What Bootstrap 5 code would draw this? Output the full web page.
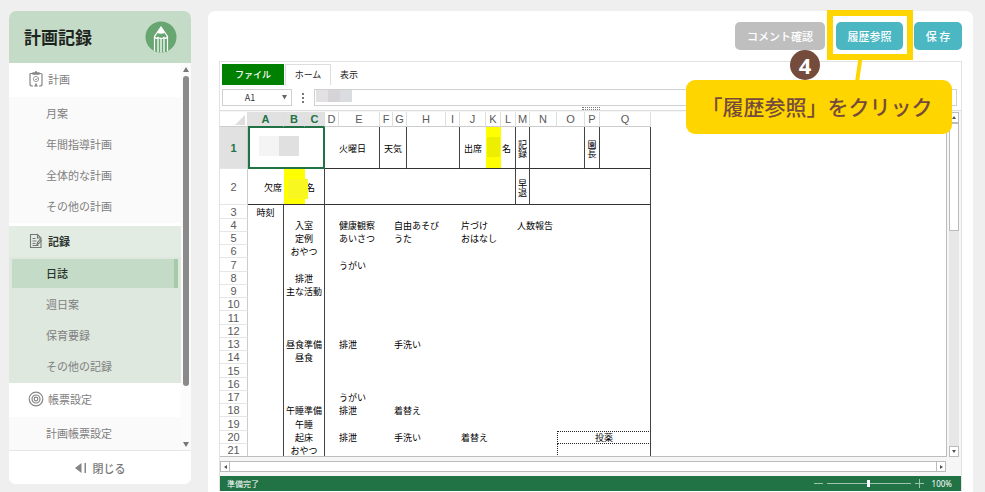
<!DOCTYPE html>
<html lang="ja">
<head>
<meta charset="utf-8">
<meta name="viewport" content="width=device-width, initial-scale=1">
<title>計画記録</title>
<link href="https://cdn.jsdelivr.net/npm/bootstrap@5.3.0/dist/css/bootstrap.min.css" rel="stylesheet">
<style>
body{background:#efefef;font-family:"Noto Sans CJK JP","Noto Sans",sans-serif;font-size:11px;line-height:16px;color:#777;padding:11px 12px 0 9px;gap:17px}
button,input,select{font-family:inherit}
.side{width:182px;border-radius:7px;margin-bottom:8px}
.side-head{background:#c4dbc7;height:52px;padding:0 14px 0 15px}
.side-head h1{font-size:17px;line-height:24px;color:#1c241d}
.side-nav a{color:#808080;text-decoration:none;display:flex;align-items:center;padding-bottom:2px}
.grp{height:34px;padding-left:19px;gap:4px}
.grp svg{width:16px;height:16px}
.side-nav a.grp-on{height:31px;background:#e2ece3;color:#2c332d;font-weight:700;margin-top:3px}
.sub{background:#fafafa;padding:1px 0}
.sub a{height:31px;padding-left:37px}
.sub-on{background:#dee8df}
.sub a.cur{height:29px;margin:1px 3px 1px 3px;padding-left:34px;background:#c4dbc7;border-right:4px solid #a5cbaa;color:#2c332d;font-weight:500}
.rail{width:10px;background:#fbfbfb;padding:4px 0 3px}
.rail i{width:6px;border-radius:3px;background:#8a8a8a;flex:1;margin:4px 0 56px}
.closer{height:34px;border:0;border-top:1px solid #e6e6e6;background:#fff;color:#777;gap:6px;font-weight:500}
.pane{border-radius:7px 7px 0 0;padding:11px 11px 0}
.tool{gap:11px;margin-bottom:11px}
.tool .btn{height:28px;font-size:11px;line-height:16px;font-weight:500;padding:0 11px;min-width:67px;border:0;border-radius:5px;color:#fff;background:#4ab7c3}
.tool .btn-off{background:#bfbfbf;padding:0 12px}
.tool .btn-save{min-width:48px}
.hi-box{left:-9px;right:-10px;top:-12px;bottom:-10px;border:6px solid #ffd500}
.tail{left:16px;top:36px;width:14px;height:24px}
.tip{right:-49px;top:58px;width:266px;height:54px;padding:0 4px 2px 0;border-radius:9px;background:#ffd500;color:#754c3c;font-size:21px;line-height:30px;font-weight:500;z-index:5}
.step{left:-46px;top:28px;width:30px;height:30px;border-radius:50%;background:#754c3c;color:#fff;font:bold 22px/30px "Noto Sans",sans-serif;z-index:6}
.book{border:1px solid #e2e2e2;border-bottom:0;color:#333;font-size:10px;margin-bottom:1px}
.tabs{padding:2px 2px 0;height:23px;gap:1px}
.tabs button{border:0;background:none;font-size:9px;line-height:20px;color:#222;padding:0 8px}
.tabs .file{background:#008000;color:#fff;width:62px;font-weight:500}
.tabs .home{border:1px solid #ddd;border-bottom:0;width:46px;padding:0}
.fx{padding:4px 4px 5px 2px;border-bottom:1px solid #ddd;height:26px}
.namebox{width:70px;height:17px}
.namebox select{appearance:none;border:1px solid #d0d0d0;background:#fff;border-radius:0;font-size:9px;line-height:13px;color:#333;padding:0 14px 0 0;text-align:center;text-align-last:center}
.caret{right:5px;top:6px}
.fx input{height:17px;border:1px solid #d0d0d0;margin-left:8px}
.blur{left:10px;top:1px}
.blur b{width:12px;height:12px}
.grip{left:362px;bottom:0;width:18px;height:3px;border:1px dotted #777;border-width:1px 0}
.work{background:#f6f6f6;min-height:0;padding:1px 2px 0 0;gap:2px}
.view{min-width:0;background:#fff;border-right:1px solid #bdbdbd;border-bottom:1px solid #bdbdbd}
.sheet{table-layout:fixed;width:431px;border-collapse:separate;border-spacing:0;color:#000;font-size:9px;line-height:11px}
.sheet th{font-family:"Liberation Sans",sans-serif;font-size:11px;line-height:14px;font-weight:400;color:#5a5a5a;text-align:center;padding:0;border-right:1px solid #d9e2de;border-bottom:1px solid #e3e8e6}
.sheet thead th{height:15px;border-bottom-color:#ccc}
.sheet tbody th{border-right-color:#c4cfca;line-height:12px}
.sheet .sel{background:#e1e1e1;color:#217346;font-weight:700}
.sheet thead .sel{border-bottom:1px solid #217346}
.sheet td{padding:0;white-space:nowrap;vertical-align:middle}
.sheet .r1 td,.sheet .r2 td{border-bottom:1px solid #333;padding-top:2px}
.sheet .r1{height:42px}
.sheet .r2{height:36px}
.sheet .r{height:13px}
.sheet .r:nth-child(4n+3){height:14px}
.sheet .e{border-right:1px solid #444}
.sheet .p{padding-left:1px}
.sheet .q{padding-right:2px}
.sheet .c{text-align:center}
.sheet .y{background:#ff0}
.sheet .r1 td.pick{border:2px solid #217346;border-top-width:1px;padding:0 0 3px 9px}
.sheet .v{text-align:center}
.sheet .v span{writing-mode:vertical-rl;display:inline-block;vertical-align:middle}
.corner{width:0;height:0;border:5px solid transparent;border-right-color:#ddd;border-bottom-color:#ddd;margin:1px 2px 0 auto}
.mos b{width:20px;height:20px}
.over{left:4px;top:10px;width:20px;height:20px;background:#f8f820}
.over-k{left:1px;top:10px;width:13px;height:20px;background:#eeee00}
.sheet .dash-l{border-left:1px dotted #222}
.sheet .dash-a{border:1px dotted #222;border-right:1px solid #444}
.vs{width:10px;background:#e7e7e7}
.vs button,.hs button{border:1px solid #bbb;background:#fff;padding:0;width:10px;height:11px;display:flex;align-items:center;justify-content:center}
.vs i{height:108px;border:1px solid #bbb;background:#fff}
.hs{background:#f6f6f6;padding:4px 15px 4px 0}
.hs i{border:1px solid #bbb;border-width:1px 0;background:#fff}
.stat{background:#217346;color:#fff;height:15px;font-size:8px;line-height:15px;padding:0 9px 0 7px}
.stat .pct{font-family:"Noto Sans",sans-serif}
.zoomer{appearance:none;width:84px;height:9px;background:linear-gradient(#9cc3ac,#9cc3ac) center/100% 1px no-repeat;margin:0 4px}
.zoomer::-webkit-slider-thumb{appearance:none;width:3px;height:7px;background:#fff}
</style>
<script src="https://cdn.jsdelivr.net/npm/bootstrap@5.3.0/dist/js/bootstrap.bundle.min.js"></script>
</head>
<body class="d-flex vh-100 overflow-hidden m-0">
<aside class="side bg-white d-flex flex-column flex-shrink-0 overflow-hidden">
  <header class="side-head d-flex align-items-center justify-content-between flex-shrink-0">
    <h1 class="m-0 fw-bold">計画記録</h1>
    <svg width="32" height="32" viewBox="0 0 32 32"><circle cx="16" cy="16" r="15.5" fill="#68a671"/><path d="M9.500 30V15.500L16 6l6.500 9.500V30" fill="none" stroke="#fff" stroke-width="1.200"/><path d="M16 5.500l-4 6.500q4 1.500 8 0z" fill="#fff"/><path d="M9.500 15.500q1.500 3 3.500 1 3 2 6 0 2 2 3.500-1" fill="none" stroke="#fff" stroke-width="1.400"/><path d="M13 17v14M16 18v13.500M19 17v14" stroke="#fff" stroke-width="1.300"/></svg>
  </header>
  <div class="d-flex flex-fill overflow-hidden">
    <nav class="side-nav flex-fill" aria-label="メニュー">
      <a class="grp" href="#"><svg viewBox="0 0 16 16" fill="none" stroke="#858585" stroke-width="1.200"><path d="M5 2.500H3q-1 0-1 1v9.500q0 2 2 2h1M11 2.500h2q1 0 1 1v9.500q0 2-2 2h-1"/><path d="M5 1.800h6v1.400H5zM7 .8h2" /><circle cx="8" cy="8" r="2.600" stroke-width=".8"/><path d="M7 8l1 1 1.500-2" stroke-width=".8"/><path d="M7 15l1-2 1 2z" fill="#858585"/></svg>計画</a>
      <div class="sub"><a href="#">月案</a><a href="#">年間指導計画</a><a href="#">全体的な計画</a><a href="#">その他の計画</a></div>
      <a class="grp grp-on" href="#"><svg viewBox="0 0 16 16" fill="none" stroke="#777" stroke-width="1.100"><path d="M9.500 1.500h-7v13H13V5L9.500 1.500V5H13"/><path d="M4.500 5.500h3M4.500 8h4M4.500 10.500h3M4.500 12.500h6"/><path d="M9 11.500l.5-2 2.500-3 1.200 1-2.500 3z" fill="#e2ece3"/></svg>記録</a>
      <div class="sub sub-on"><a class="cur" href="#" aria-current="page">日誌</a><a href="#">週日案</a><a href="#">保育要録</a><a href="#">その他の記録</a></div>
      <a class="grp" href="#"><svg viewBox="0 0 16 16" fill="none" stroke="#858585" stroke-width="1.200"><circle cx="8" cy="8" r="6.800"/><circle cx="8" cy="8" r="4"/><circle cx="8" cy="8" r="1.800"/></svg>帳票設定</a>
      <div class="sub"><a href="#">計画帳票設定</a></div>
    </nav>
    <div class="rail d-flex flex-column align-items-center">
      <svg width="6" height="5" viewBox="0 0 6 5"><path d="M3 0l3 5H0z" fill="#777"/></svg><i></i>
      <svg width="6" height="5" viewBox="0 0 6 5"><path d="M3 5l3-5H0z" fill="#777"/></svg>
    </div>
  </div>
  <button class="closer d-flex align-items-center justify-content-center flex-shrink-0" type="button"><svg width="12" height="10" viewBox="0 0 12 10"><path d="M6.500 0v10L0 5zM9.500 0h1.500v10H9.500z" fill="#858585"/></svg>閉じる</button>
</aside>
<main class="pane bg-white flex-fill d-flex flex-column">
  <div class="tool d-flex justify-content-end">
    <button class="btn btn-off" type="button">コメント確認</button>
    <div class="position-relative">
      <button class="btn" type="button">履歴参照</button>
      <div class="hi-box position-absolute pe-none"></div>
      <svg class="tail position-absolute" viewBox="0 0 14 24"><path d="M8.500 0L5 24" stroke="#ffd500" stroke-width="4"/></svg>
      <div class="step position-absolute text-center">4</div>
      <div class="tip position-absolute d-flex align-items-center justify-content-center text-nowrap">「履歴参照」をクリック</div>
    </div>
    <button class="btn btn-save" type="button">保 存</button>
  </div>
  <section class="book d-flex flex-column flex-fill overflow-hidden">
    <div class="tabs d-flex flex-shrink-0"><button class="file" type="button">ファイル</button><button class="home" type="button">ホーム</button><button type="button">表示</button></div>
    <div class="fx d-flex position-relative flex-shrink-0">
      <div class="namebox position-relative"><select class="w-100 h-100 d-block" aria-label="セル"><option>A1</option></select><svg class="caret position-absolute" width="5" height="5" viewBox="0 0 5 5"><path d="M0 0h5L2.500 4.500z" fill="#666"/></svg></div>
      <svg width="14" height="17" viewBox="0 0 14 17"><path d="M11 4v2M11 8v2M11 12v2" stroke="#777" stroke-width="2"/></svg>
      <div class="flex-fill position-relative"><div class="d-flex"><input class="flex-fill" type="text" aria-label="数式バー"></div><div class="blur position-absolute d-flex"><b style="background:#e3e0e2"></b><b style="background:#d6d4d6"></b><b style="background:#dbdcdf"></b></div></div>
      <span class="grip position-absolute"></span>
    </div>
    <div class="work d-flex flex-fill">
      <div class="view flex-fill overflow-hidden">
        <table class="sheet">
          <colgroup><col style="width:28px"><col style="width:36px"><col style="width:21px"><col style="width:20px"><col style="width:14px"><col style="width:41px"><col style="width:13px"><col style="width:14px"><col style="width:39px"><col style="width:14px"><col style="width:26px"><col style="width:15px"><col style="width:15px"><col style="width:14px"><col style="width:27px"><col style="width:28px"><col style="width:15px"><col style="width:51px"></colgroup>
          <thead><tr><th><div class="corner"></div></th><th class="sel">A</th><th class="sel">B</th><th class="sel">C</th><th>D</th><th>E</th><th>F</th><th>G</th><th>H</th><th>I</th><th>J</th><th>K</th><th>L</th><th>M</th><th>N</th><th>O</th><th>P</th><th>Q</th></tr></thead>
          <tbody>
          <tr class="r1"><th class="sel">1</th><td class="pick" colspan="3"><div class="mos d-flex"><b style="background:#f4f4f4"></b><b style="background:#e0e0e0"></b></div></td><td></td><td class="e">火曜日</td><td class="e c" colspan="2">天気</td><td class="e" colspan="2"></td><td class="c">出席</td><td class="y position-relative"><span class="over-k position-absolute"></span></td><td class="e p">名</td><td class="e v"><span>記録</span></td><td class="e" colspan="2"></td><td class="e v"><span>園長</span></td><td class="e"></td></tr>
          <tr class="r2"><th>2</th><td class="text-end q">欠席</td><td class="y position-relative"><span class="over position-absolute"></span></td><td class="e p">名</td><td class="e" colspan="9"></td><td class="e v"><span>早退</span></td><td class="e" colspan="4"></td></tr>
          <tr class="r"><th>3</th><td class="e c">時刻</td><td class="e" colspan="2"></td><td class="e" colspan="14"></td></tr>
          <tr class="r"><th>4</th><td class="e"></td><td class="e c" colspan="2">入室</td><td></td><td colspan="2">健康観察</td><td class="p" colspan="3">自由あそび</td><td class="p" colspan="3">片づけ</td><td class="e p" colspan="5">人数報告</td></tr>
          <tr class="r"><th>5</th><td class="e"></td><td class="e c" colspan="2">定例</td><td></td><td colspan="2">あいさつ</td><td class="p" colspan="3">うた</td><td class="e p" colspan="8">おはなし</td></tr>
          <tr class="r"><th>6</th><td class="e"></td><td class="e c" colspan="2">おやつ</td><td class="e" colspan="14"></td></tr>
          <tr class="r"><th>7</th><td class="e"></td><td class="e" colspan="2"></td><td></td><td class="e" colspan="13">うがい</td></tr>
          <tr class="r"><th>8</th><td class="e"></td><td class="e c" colspan="2">排泄</td><td class="e" colspan="14"></td></tr>
          <tr class="r"><th>9</th><td class="e"></td><td class="e c" colspan="2">主な活動</td><td class="e" colspan="14"></td></tr>
          <tr class="r"><th>10</th><td class="e"></td><td class="e" colspan="2"></td><td class="e" colspan="14"></td></tr>
          <tr class="r"><th>11</th><td class="e"></td><td class="e" colspan="2"></td><td class="e" colspan="14"></td></tr>
          <tr class="r"><th>12</th><td class="e"></td><td class="e" colspan="2"></td><td class="e" colspan="14"></td></tr>
          <tr class="r"><th>13</th><td class="e"></td><td class="e c" colspan="2">昼食準備</td><td></td><td colspan="2">排泄</td><td class="e p" colspan="11">手洗い</td></tr>
          <tr class="r"><th>14</th><td class="e"></td><td class="e c" colspan="2">昼食</td><td class="e" colspan="14"></td></tr>
          <tr class="r"><th>15</th><td class="e"></td><td class="e" colspan="2"></td><td class="e" colspan="14"></td></tr>
          <tr class="r"><th>16</th><td class="e"></td><td class="e" colspan="2"></td><td class="e" colspan="14"></td></tr>
          <tr class="r"><th>17</th><td class="e"></td><td class="e" colspan="2"></td><td></td><td class="e" colspan="13">うがい</td></tr>
          <tr class="r"><th>18</th><td class="e"></td><td class="e c" colspan="2">午睡準備</td><td></td><td colspan="2">排泄</td><td class="e p" colspan="11">着替え</td></tr>
          <tr class="r"><th>19</th><td class="e"></td><td class="e c" colspan="2">午睡</td><td class="e" colspan="14"></td></tr>
          <tr class="r"><th>20</th><td class="e"></td><td class="e c" colspan="2">起床</td><td></td><td colspan="2">排泄</td><td class="p" colspan="3">手洗い</td><td class="p" colspan="5">着替え</td><td class="dash-a c" colspan="3">投薬</td></tr>
          <tr class="r"><th>21</th><td class="e"></td><td class="e c" colspan="2">おやつ</td><td colspan="11"></td><td class="e dash-l" colspan="3"></td></tr>
          </tbody>
        </table>
      </div>
      <div class="vs d-flex flex-column"><button type="button" aria-label="上へ"><svg width="4" height="3" viewBox="0 0 4 3"><path d="M2 0l2 3H0z" fill="#555"/></svg></button><i></i><button class="mt-auto" type="button" aria-label="下へ"><svg width="4" height="3" viewBox="0 0 4 3"><path d="M2 3l2-3H0z" fill="#555"/></svg></button></div>
    </div>
    <div class="hs d-flex flex-shrink-0"><button type="button" aria-label="左へ"><svg width="3" height="4" viewBox="0 0 3 4"><path d="M0 2l3-2v4z" fill="#555"/></svg></button><i class="flex-fill"></i><button type="button" aria-label="右へ"><svg width="3" height="4" viewBox="0 0 3 4"><path d="M3 2L0 0v4z" fill="#555"/></svg></button></div>
    <div class="stat d-flex align-items-center flex-shrink-0"><span class="me-auto">準備完了</span><svg width="9" height="9" viewBox="0 0 9 9"><path d="M0 4.500h9" stroke="#9cc3ac"/></svg><input class="zoomer" type="range" value="50" aria-label="ズーム"><svg class="me-2" width="9" height="9" viewBox="0 0 9 9"><path d="M0 4.500h9M4.500 0v9" stroke="#9cc3ac"/></svg><span class="pct">100%</span></div>
  </section>
</main>
</body>
</html>
